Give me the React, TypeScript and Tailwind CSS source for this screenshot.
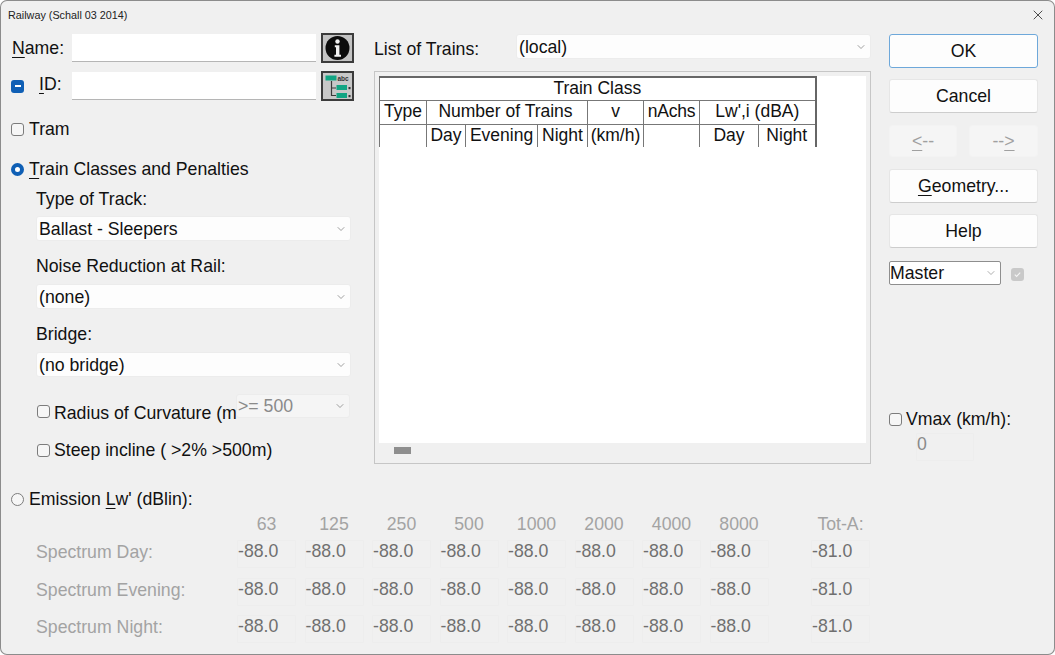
import { ChevronDown, X } from 'lucide-react';
import type { ReactNode } from 'react';

const frequencies = ['63', '125', '250', '500', '1000', '2000', '4000', '8000'];
const spectrumRows = [
  { label: 'Spectrum Day:', spacing: 'mt-[6px]' },
  { label: 'Spectrum Evening:', spacing: 'mt-[10px]' },
  { label: 'Spectrum Night:', spacing: 'mt-[9px]' },
];

function Mn({ children }: { children: ReactNode }) {
  return <span className="underline decoration-1 underline-offset-[3px]">{children}</span>;
}

function Check({ className = '' }: { className?: string }) {
  return (
    <span
      className={`box-border block h-[13px] w-[13px] shrink-0 rounded-[3px] border border-[#7c7c7c] bg-[#f6f6f6] ${className}`}
    />
  );
}

function Select({
  value,
  className = '',
  disabled = false,
}: {
  value: string;
  className?: string;
  disabled?: boolean;
}) {
  return (
    <div
      className={`box-border flex items-center justify-between rounded-[3px] border border-[#ececec] pl-[2px] pr-[3px] ${
        disabled ? 'bg-[#f5f5f5] text-[#8a8a8a]' : 'bg-[#fdfdfd] text-[#111]'
      } ${className}`}
    >
      <span className="pt-[2px] leading-none">{value}</span>
      <ChevronDown size={12} strokeWidth={1.4} className="text-[#777]" />
    </div>
  );
}

function Btn({
  children,
  className = '',
  disabled = false,
}: {
  children: ReactNode;
  className?: string;
  disabled?: boolean;
}) {
  return (
    <div
      className={`box-border flex items-center justify-center rounded-[3px] border ${
        disabled
          ? 'border-[#f3f3f3] bg-[#f5f5f5] text-[#a0a0a0]'
          : 'border-[#e6e6e6] border-b-[#cdcdcd] bg-[#fdfdfd] text-[#111]'
      } ${className}`}
    >
      {children}
    </div>
  );
}

function ValueBox({ value, className = '' }: { value: string; className?: string }) {
  return (
    <div
      className={`box-border flex h-[28px] w-[59px] shrink-0 items-start rounded-[1px] border border-[#ededed] pl-0 leading-[21px] text-[#6f6f6f] ${className}`}
    >
      {value}
    </div>
  );
}

function InfoIcon() {
  return (
    <svg viewBox="0 0 33 30" className="h-[30px] w-[33px] shrink-0">
      <rect x="1" y="1" width="31" height="28" fill="#c4c4c4" stroke="#3c3c3c" strokeWidth="2" />
      <circle cx="16.5" cy="15" r="12" fill="#0c0c0c" />
      <circle cx="16.5" cy="8.5" r="2.2" fill="#f2f2f2" />
      <path d="M13.8 12.2h4.6v9.6h1.6v2h-6.6v-2h1.6v-7.6h-1.2z" fill="#f2f2f2" />
    </svg>
  );
}

function TreeIcon() {
  return (
    <svg viewBox="0 0 33 30" className="h-[30px] w-[33px] shrink-0">
      <rect x="1" y="1" width="31" height="28" fill="#c8c8c8" stroke="#3c3c3c" strokeWidth="2" />
      <rect x="4.5" y="4.5" width="11" height="5" fill="#12a583" />
      <text x="16.5" y="9.5" fontSize="6.5" fontWeight="700" fill="#333" fontFamily="'Liberation Sans', sans-serif">
        abc
      </text>
      <path d="M10.5 10v14.5h4.5M10.5 17h4.5" fill="none" stroke="#3a3a3a" strokeWidth="1.2" />
      <rect x="15.5" y="14" width="10.5" height="5" fill="#12a583" />
      <rect x="15.5" y="22" width="10.5" height="5" fill="#12a583" />
      <rect x="27.5" y="16" width="2" height="2.2" fill="#333" />
      <rect x="27.5" y="24" width="2" height="2.2" fill="#333" />
    </svg>
  );
}

const th = 'border-l border-b border-[#777] p-0 text-center font-normal leading-none';

function TrainTable() {
  return (
    <table className="w-[436px] table-fixed border-collapse border-t-2 border-r-2 border-t-[#666] border-r-[#666] text-[17.5px] text-[#111]">
      <colgroup>
        <col className="w-[47px]" />
        <col className="w-[39px]" />
        <col className="w-[72px]" />
        <col className="w-[50px]" />
        <col className="w-[56px]" />
        <col className="w-[56px]" />
        <col className="w-[59px]" />
        <col className="w-[57px]" />
      </colgroup>
      <tbody>
        <tr className="h-[23px]">
          <th colSpan={8} className={th}>Train Class</th>
        </tr>
        <tr className="h-[24px]">
          <th className={th}>Type</th>
          <th colSpan={3} className={`${th} pr-[3px]`}>Number of Trains</th>
          <th className={th}>v</th>
          <th className={`${th} tracking-[-0.2px]`}>nAchs</th>
          <th colSpan={2} className={th}>Lw',i (dBA)</th>
        </tr>
        <tr className="h-[23px] [&>th]:border-b-0">
          <th className={th} />
          <th className={th}>Day</th>
          <th className={th}>Evening</th>
          <th className={th}>Night</th>
          <th className={th}>(km/h)</th>
          <th className={th} />
          <th className={th}>Day</th>
          <th className={th}>Night</th>
        </tr>
      </tbody>
    </table>
  );
}

export default function App() {
  return (
    <div className="h-[655px] w-[1055px] overflow-hidden bg-white font-['Liberation_Sans',Arial,sans-serif] text-[17.7px] text-[#111]">
      <div className="h-[655px] w-[1055px] rounded-[7px] bg-[#f0f0f0] shadow-[inset_0_0_0_1px_#8c8c8c]">
        <div className="flex h-[30px] items-center justify-between pl-2 pr-[9px]">
          <span className="text-[10.8px] text-[#222]">Railway (Schall 03 2014)</span>
          <X size={16} strokeWidth={1.2} className="text-[#222]" />
        </div>

        <div className="flex h-[435px] pl-[11px]">
          {/* left column */}
          <div className="w-[344px]">
            <div className="mt-[3px] flex h-[30px] items-center">
              <span className="w-[61px] shrink-0 pl-[1px]"><Mn>N</Mn>ame:</span>
              <div className="h-[28px] w-[244px] border-b border-[#b5b5b5] bg-white" />
              <div className="ml-[5px]"><InfoIcon /></div>
            </div>
            <div className="mt-[8px] flex h-[30px] items-center">
              <span className="flex h-[13px] w-[13px] shrink-0 items-center justify-center rounded-[3px] bg-[#0f5fb5]">
                <span className="h-[1.5px] w-[6px] bg-white" />
              </span>
              <span className="w-[48px] shrink-0 pb-[4px] pl-[15px]"><Mn>I</Mn>D:</span>
              <div className="h-[28px] w-[244px] border-b border-[#b5b5b5] bg-white" />
              <div className="ml-[5px]"><TreeIcon /></div>
            </div>
            <div className="mt-[16px] flex h-[24px] items-center gap-[5px]">
              <Check />
              <span>Tram</span>
            </div>
            <div className="mt-[16px] flex h-[24px] items-center gap-[5px]">
              <span className="box-border block h-[13px] w-[13px] shrink-0 rounded-full border-[4px] border-[#0f5fb5] bg-white" />
              <span><Mn>T</Mn>rain Classes and Penalties</span>
            </div>
            <div className="ml-[25px]">
              <div className="mt-[6px] flex h-[24px] items-center">Type of Track:</div>
              <Select value="Ballast - Sleepers" className="mt-[5px] h-[25px] w-[315px]" />
              <div className="mt-[13px] flex h-[24px] items-center">Noise Reduction at Rail:</div>
              <Select value="(none)" className="mt-[6px] h-[25px] w-[315px]" />
              <div className="mt-[13px] flex h-[24px] items-center">Bridge:</div>
              <Select value="(no bridge)" className="mt-[6px] h-[25px] w-[315px]" />
              <div className="mt-[17px] flex h-[24px] items-start">
                <Check className="ml-[1px] mt-[11px]" />
                <span className="ml-[4px] mt-[6px] w-[182px] shrink-0 whitespace-nowrap">Radius of Curvature (m</span>
                <Select value=">= 500" disabled className="h-[24px] w-[114px] !pl-[1px]" />
              </div>
              <div className="mt-[20px] flex h-[24px] items-center">
                <Check className="ml-[1px]" />
                <span className="ml-[4px]">Steep incline ( &gt;2% &gt;500m)</span>
              </div>
            </div>
          </div>

          {/* list of trains */}
          <div className="ml-[19px] w-[497px]">
            <div className="mt-[4px] flex h-[25px] items-center">
              <span className="w-[142px] shrink-0 pt-[5px]">List of Trains:</span>
              <Select value="(local)" className="h-[25px] w-[355px]" />
            </div>
            <div className="mt-[12px] box-border h-[393px] border border-[#c6c6c6] px-[4px] pt-[4px]">
              <div className="h-[367px] bg-white">
                <TrainTable />
              </div>
              <div className="ml-[15px] mt-[4px] h-[7px] w-[17px] bg-[#8e8e8e]" />
            </div>
          </div>

          {/* buttons */}
          <div className="ml-[18px] w-[149px]">
            <Btn className="mt-[4px] h-[34px] !border-[#6ea8da]">OK</Btn>
            <Btn className="mt-[11px] h-[34px]">Cancel</Btn>
            <div className="mt-[12px] flex justify-between">
              <Btn disabled className="h-[32px] w-[68px]"><Mn>&lt;</Mn>--</Btn>
              <Btn disabled className="h-[32px] w-[69px]">--<Mn>&gt;</Mn></Btn>
            </div>
            <Btn className="mt-[12px] h-[34px]"><Mn>G</Mn>eometry...</Btn>
            <Btn className="mt-[11px] h-[34px]">Help</Btn>
            <div className="mt-[13px] flex h-[24px] items-center">
              <div className="box-border flex h-[24px] w-[112px] items-center justify-between rounded-[2px] border border-[#8e8e8e] bg-white pl-0 pr-[3px]">
                <span>Master</span>
                <ChevronDown size={12} strokeWidth={1.2} className="text-[#777]" />
              </div>
              <span className="ml-[10px] mt-[3px] flex h-[13px] w-[13px] items-center justify-center rounded-[3px] bg-[#c9c9c9]">
                <svg viewBox="0 0 10 10" className="h-[9px] w-[9px]">
                  <path d="M2 5.2l2 2 4-4.2" fill="none" stroke="#f5f5f5" strokeWidth="1.2" />
                </svg>
              </span>
            </div>
            <div className="mt-[122px] flex h-[24px] items-center gap-[4px]">
              <Check />
              <span>Vmax (km/h):</span>
            </div>
            <ValueBox value="0" className="ml-[27px] mt-[2px] !w-[58px] text-[#8a8a8a]" />
          </div>
        </div>

        {/* emission spectrum */}
        <div className="pl-[11px]">
          <div className="mt-[22px] flex h-[24px] items-center gap-[5px]">
            <span className="box-border block h-[13px] w-[13px] shrink-0 rounded-full border border-[#7c7c7c] bg-[#f6f6f6]" />
            <span>Emission <Mn>L</Mn>w' (dBlin):</span>
          </div>
          <div className="mt-[3px] flex h-[20px] items-center pl-[226px] text-[#a3a3a3]">
            {frequencies.map((freq) => (
              <span key={freq} className="mr-[8.5px] w-[59px] shrink-0 text-center">{freq}</span>
            ))}
            <span className="ml-[34px] w-[59px] text-center">Tot-A:</span>
          </div>
          {spectrumRows.map((row) => (
            <div key={row.label} className={`flex ${row.spacing}`}>
              <span className="w-[226px] shrink-0 pl-[25px] pt-[2px] leading-[20px] text-[#a3a3a3]">{row.label}</span>
              {frequencies.map((freq) => (
                <ValueBox key={freq} value="-88.0" className="mr-[8.5px]" />
              ))}
              <ValueBox value="-81.0" className="ml-[34px]" />
            </div>
          ))}
        </div>
      </div>
    </div>
  );
}
